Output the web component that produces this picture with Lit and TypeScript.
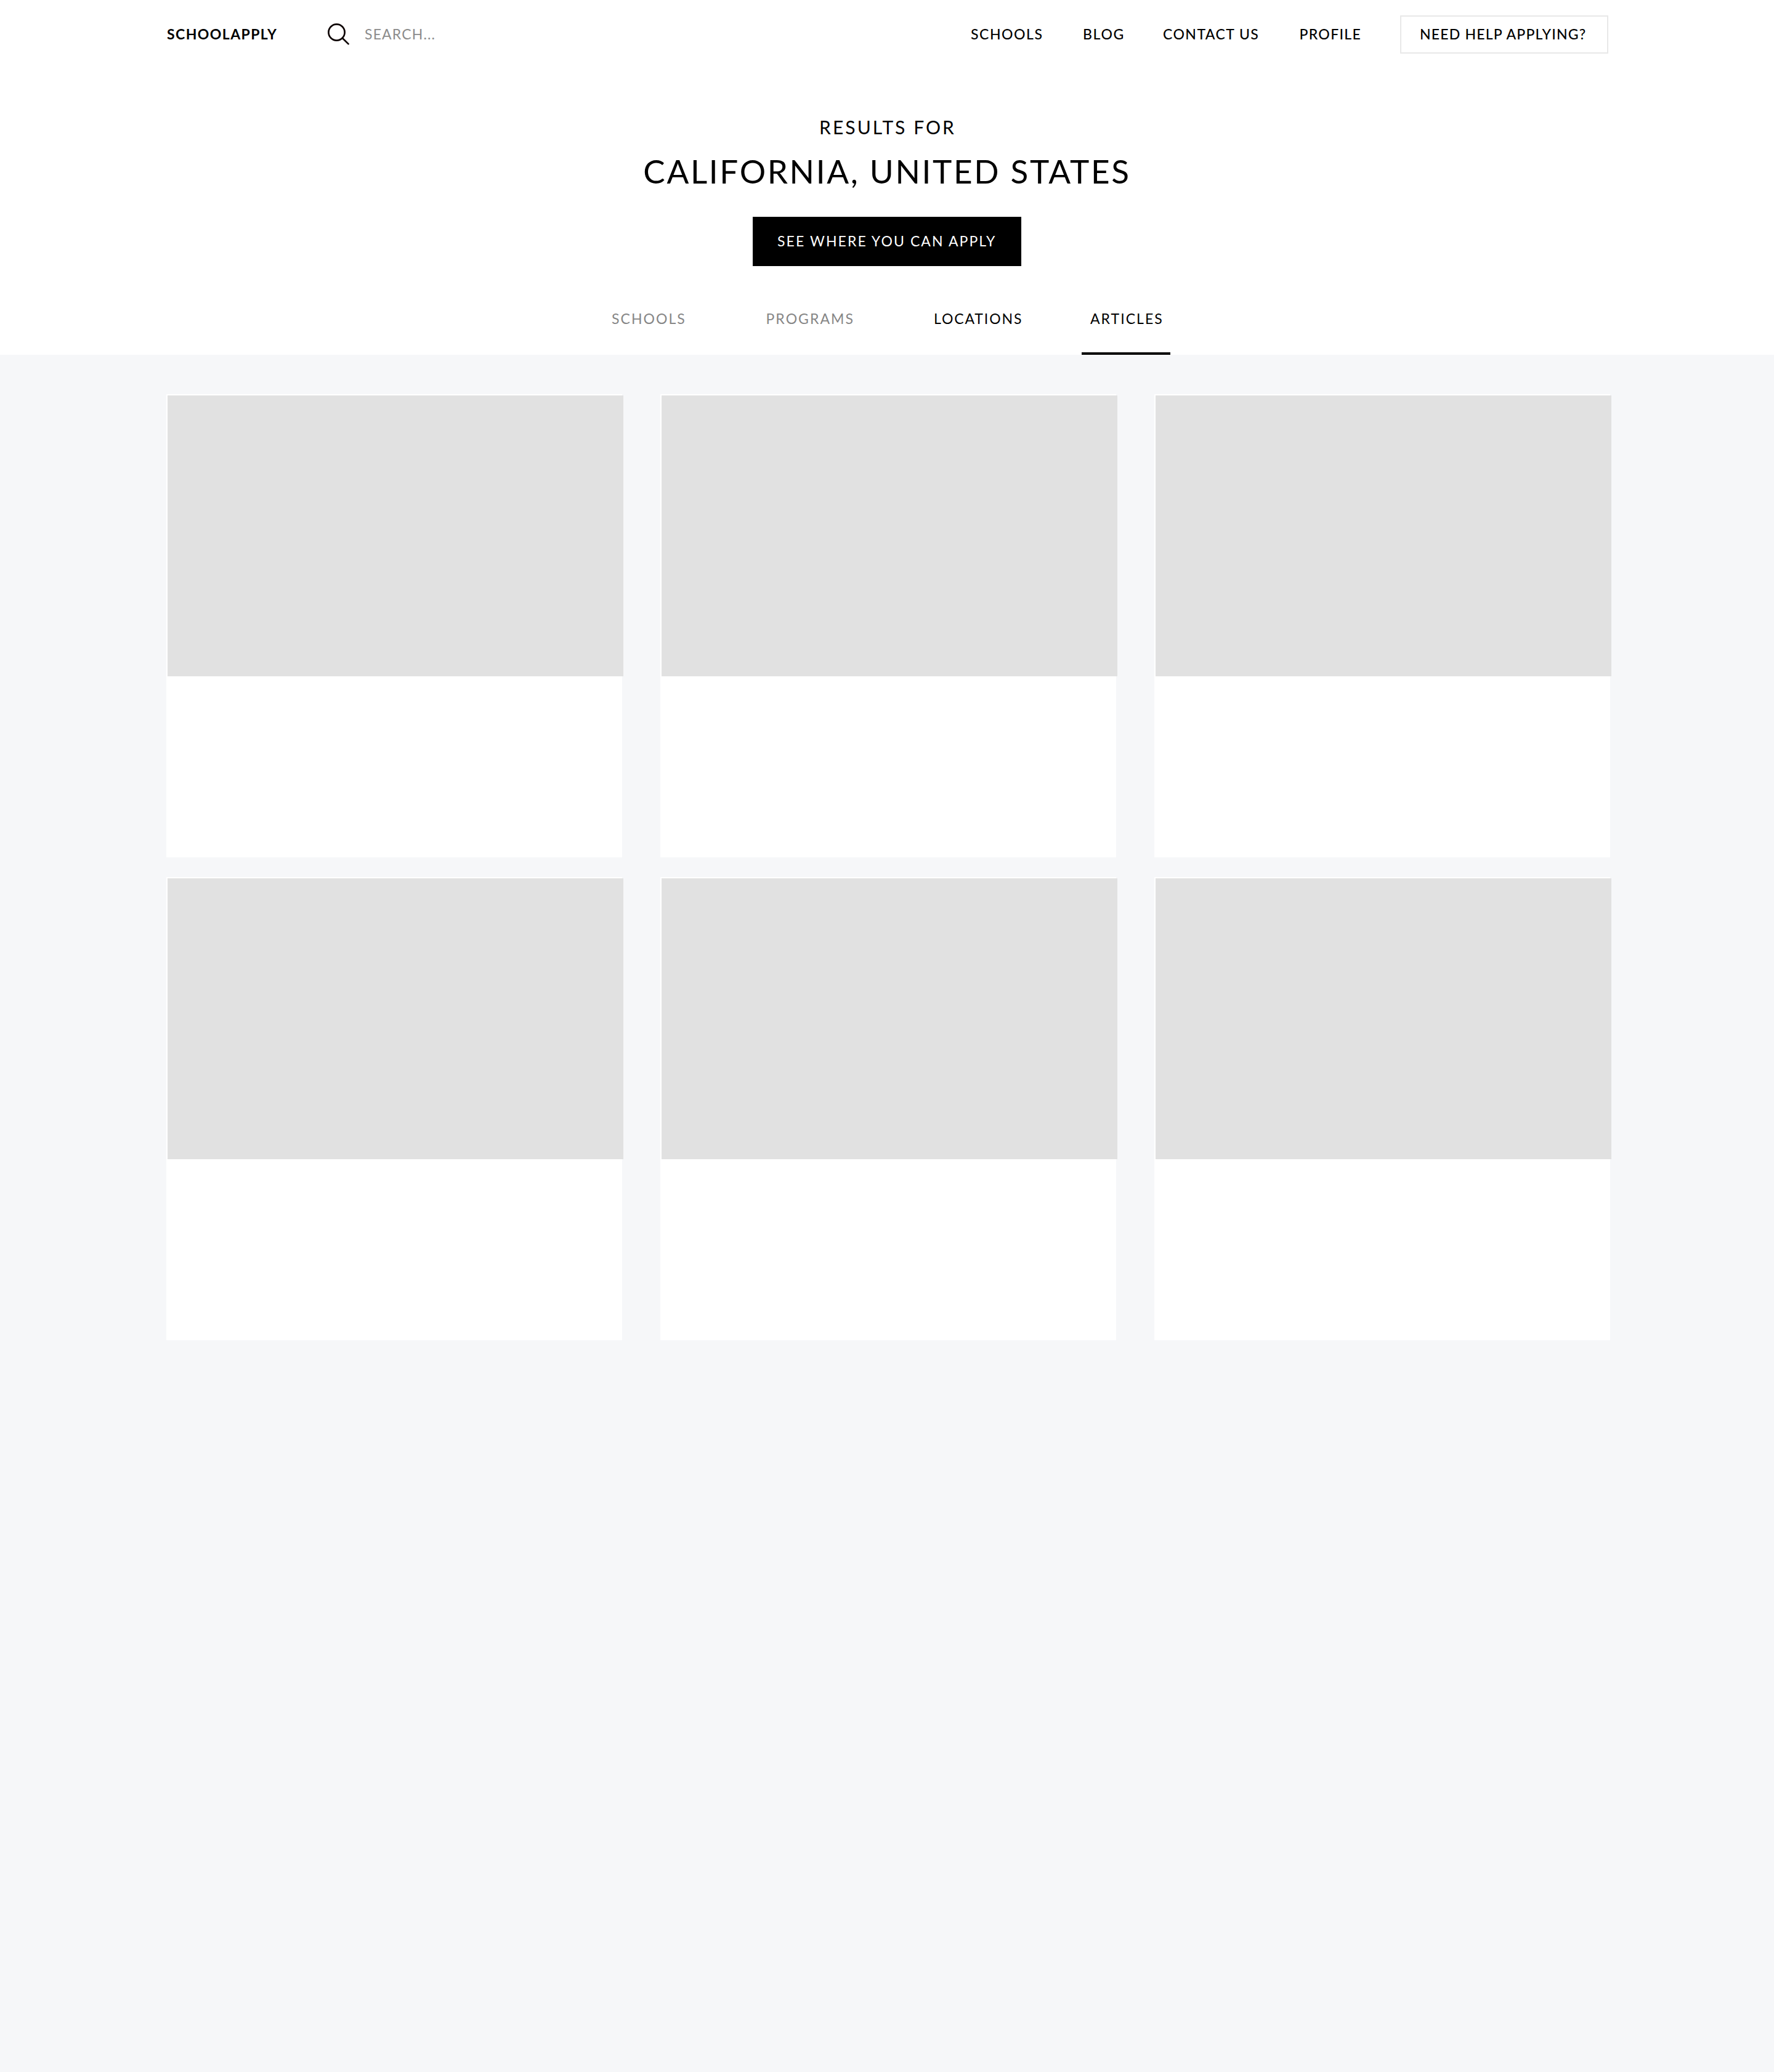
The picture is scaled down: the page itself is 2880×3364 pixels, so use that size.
import { LitElement, html, css } from "lit";
import { customElement } from "lit/decorators.js";

const cards = [1, 2, 3, 4, 5, 6];

@customElement("app-root")
export class AppRoot extends LitElement {
  static styles = css`
    :host {
      display: block;
      min-height: 3364px;
      background: #f6f7f9;
      color: #000;
      font-family: Lato, "Open Sans", sans-serif;
      font-size: 23px;
      white-space: nowrap;
    }
    * { box-sizing: border-box; }
    header { height: 576px; background: #fff; }

    .bar {
      display: flex;
      align-items: center;
      height: 112px;
      padding: 0 269px 0 271px;
    }
    .bar .text { line-height: 32px; padding-bottom: 2px; }
    .logo { width: 259px; font-weight: 700; letter-spacing: 1.41px; }
    .icon { display: block; width: 40px; height: 40px; margin-right: 22px; }
    .search { color: #8c8c8c; letter-spacing: 1.15px; }
    nav { display: flex; align-items: center; gap: 64px; margin-left: auto; font-weight: 500; }
    .schools { width: 118px; letter-spacing: 1.55px; }
    .blog { width: 66px; letter-spacing: 1.66px; }
    .contact { width: 157.5px; letter-spacing: 1.44px; }
    .profile { width: 99.5px; letter-spacing: 1.32px; }
    .help {
      width: 338px;
      height: 62px;
      padding: 0 0 2px 30px;
      border: 2px solid #e8e8e8;
      line-height: 56px;
      letter-spacing: 1.2px;
    }

    .hero { display: flex; flex-direction: column; align-items: center; padding-top: 76px; }
    .kicker { font-size: 30px; line-height: 36px; letter-spacing: 3.06px; padding-left: 2px; }
    h1 {
      margin: 22px 0 0;
      font-size: 53px;
      font-weight: 400;
      line-height: 63px;
      letter-spacing: 2.67px;
    }
    .apply {
      width: 436px;
      height: 80px;
      margin-top: 43px;
      padding: 0 0 2px 40px;
      background: #000;
      color: #fff;
      line-height: 78px;
      letter-spacing: 2.09px;
    }

    .tabs {
      display: grid;
      grid-template-columns: 250.5px 272.5px 254px 144px;
      height: 144px;
      margin-left: 979px;
    }
    .tab { padding: 71px 0 0 14px; line-height: 28px; letter-spacing: 2.05px; }
    .muted { color: #868686; }
    .locations { letter-spacing: 1.9px; }
    .active { border-bottom: 4px solid #000; }

    .grid {
      display: grid;
      grid-template-columns: 740px 740px 740px;
      gap: 32px 62px;
      padding: 64px 0 0 270px;
    }
    .card { height: 752px; background: #fff; padding: 2px 0 0 2px; }
    .photo { width: 740px; height: 456px; background: #e1e1e1; }
  `;

  render() {
    return html`
      <header>
        <div class="bar">
          <div class="text logo">SCHOOLAPPLY</div>
          <svg class="icon" viewBox="0 0 40 40" fill="none" stroke="#0d0303" stroke-width="2.7" stroke-linecap="round">
            <circle cx="16.5" cy="16.5" r="13.1" />
            <path d="M26 26L35.6 35.4" />
          </svg>
          <div class="text search">SEARCH...</div>
          <nav>
            <div class="text schools">SCHOOLS</div>
            <div class="text blog">BLOG</div>
            <div class="text contact">CONTACT US</div>
            <div class="text profile">PROFILE</div>
            <div class="help">NEED HELP APPLYING?</div>
          </nav>
        </div>
        <div class="hero">
          <div class="kicker">RESULTS FOR</div>
          <h1>CALIFORNIA, UNITED STATES</h1>
          <div class="apply">SEE WHERE YOU CAN APPLY</div>
        </div>
        <div class="tabs">
          <div class="tab muted">SCHOOLS</div>
          <div class="tab muted">PROGRAMS</div>
          <div class="tab locations">LOCATIONS</div>
          <div class="tab active">ARTICLES</div>
        </div>
      </header>
      <main class="grid">
        ${cards.map(() => html`<div class="card"><div class="photo"></div></div>`)}
      </main>
    `;
  }
}
